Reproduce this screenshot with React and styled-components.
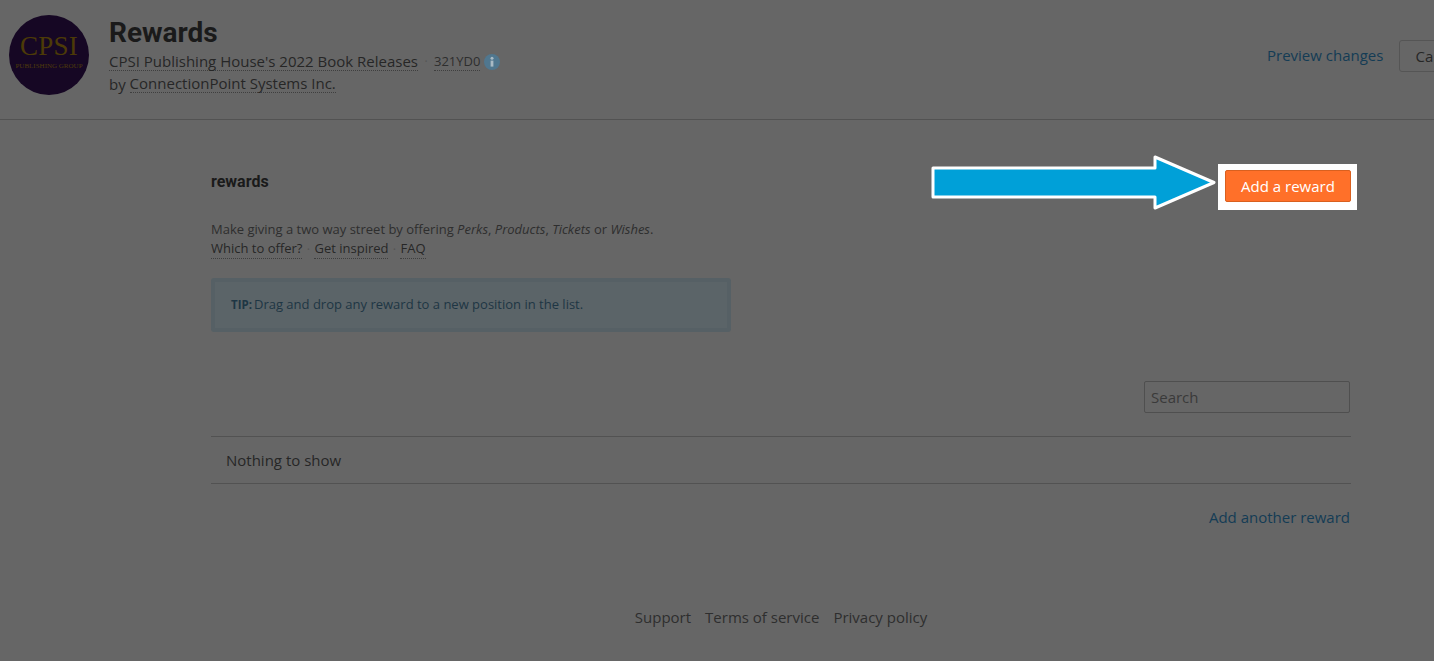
import React from "react";
import styled, { createGlobalStyle } from "styled-components";

const Global = createGlobalStyle`
  html, body { margin: 0; padding: 0; background: #666666; }
  body { font-family: "Open Sans", "Liberation Sans", sans-serif; color: #222; overflow: hidden; }
  * { box-sizing: border-box; }
`;

const Page = styled.div`
  width: 1434px;
  height: 661px;
  overflow: hidden;
  background: #666666;
`;

const Header = styled.header`
  display: grid;
  grid-template-columns: 1267px 200px;
  height: 120px;
  border-bottom: 1px solid #525252;
  padding-top: 15px;
`;

const Brand = styled.div`
  display: flex;
  padding-left: 9px;
  gap: 20px;
`;

const Logo = styled.div`
  width: 80px;
  height: 80px;
  border-radius: 50%;
  background: #160724;
  display: flex;
  flex-direction: column;
  align-items: center;
  padding-top: 18px;
  flex: none;
`;

const LogoMark = styled.span`
  font-family: "Liberation Serif", serif;
  font-size: 27px;
  line-height: 27px;
  color: #4c3a07;
  letter-spacing: 0.3px;
`;

const LogoSub = styled.span`
  font-family: "Liberation Serif", serif;
  font-size: 7px;
  line-height: 8px;
  margin-top: 2px;
  color: #4e3b0b;
  white-space: nowrap;
`;

const Titles = styled.div`
  display: flex;
  flex-direction: column;
  padding-top: 1px;
`;

const Title = styled.h1`
  margin: 0;
  font-family: Roboto, sans-serif;
  font-weight: 700;
  font-size: 28px;
  line-height: 34px;
  margin-bottom: 1px;
  color: #1a1a1a;
`;

const SubLine = styled.div`
  display: flex;
  align-items: center;
  font-size: 15px;
  line-height: 22px;
  color: #262626;
  height: 22px;
  white-space: pre;
`;

const Dotted = styled.span`
  color: ${(p) => p.$color || "#262626"};
  font-size: ${(p) => p.$size || "inherit"};
  line-height: 17px;
  border-bottom: 1px dotted #3f3f3f;
`;

const Sep = styled.span`
  color: #555;
  font-size: 12px;
  width: 16px;
  text-align: center;
`;

const InfoIcon = styled.svg`
  width: 16px;
  height: 16px;
  margin-left: 4px;
`;

const Actions = styled.div`
  display: flex;
  align-items: center;
  gap: 16px;
  height: 32px;
  margin-top: 25px;
`;

const Preview = styled.a`
  font-size: 15px;
  line-height: 20px;
  padding-bottom: 2px;
  color: #143c55;
  white-space: nowrap;
`;

const Ghost = styled.button`
  flex: none;
  height: 32px;
  width: 90px;
  padding: 0 0 0 15px;
  text-align: left;
  font-family: inherit;
  font-size: 15px;
  color: #262626;
  background: #666666;
  border: 1px solid #555;
  border-radius: 3px;
`;

const Main = styled.main`
  width: 1140px;
  margin-left: 211px;
`;

const TopRow = styled.div`
  display: flex;
  justify-content: space-between;
  align-items: flex-start;
  padding-top: 44px;
  position: relative;
`;

const SectionTitle = styled.h2`
  margin: 8px 0 0;
  font-family: Roboto, sans-serif;
  font-size: 16px;
  line-height: 20px;
  font-weight: 700;
  color: #1a1a1a;
`;

const Highlight = styled.div`
  background: #ffffff;
  padding: 6px 6px 8px 7px;
  margin-right: -6px;
`;

const Primary = styled.button`
  display: block;
  width: 126px;
  height: 32px;
  padding: 0;
  background: #ff7029;
  border: 1px solid #d9601f;
  border-radius: 2px;
  color: #fff;
  font-family: inherit;
  font-size: 15px;
`;

const Arrow = styled.svg`
  position: absolute;
  left: 719px;
  top: 34px;
  width: 292px;
  height: 58px;
`;

const Intro = styled.p`
  margin: 10px 0 0;
  font-size: 13px;
  line-height: 19px;
  color: #2e2e2e;
`;

const LinkRow = styled.div`
  display: flex;
  font-size: 13px;
  line-height: 19px;
  height: 19px;
  margin-top: 1px;
  color: #222;
`;

const LinkDot = styled.span`
  width: 12px;
  text-align: center;
  color: #555;
`;

const Tip = styled.div`
  margin-top: 19px;
  width: 520px;
  height: 54px;
  background: #5b6468;
  border: 4px solid #566065;
  border-radius: 3px;
  padding: 0 16px 2px;
  display: flex;
  align-items: center;
  font-size: 13px;
  color: #1e3644;
  gap: 2px;
`;

const TipLabel = styled.b`
  font-size: 11.5px;
  font-weight: 700;
`;

const SearchRow = styled.div`
  display: flex;
  justify-content: flex-end;
  margin-top: 49px;
  padding-right: 1px;
`;

const SearchInput = styled.div`
  width: 206px;
  height: 32px;
  border: 1px solid #4f4f4f;
  border-radius: 2px;
  padding-left: 6px;
  font-size: 15px;
  line-height: 31px;
  color: #3a3a3a;
`;

const EmptyRow = styled.div`
  margin-top: 23px;
  height: 48px;
  border-top: 1px solid #525252;
  border-bottom: 1px solid #525252;
  padding-left: 15px;
  font-size: 15px;
  line-height: 47px;
  color: #262626;
`;

const AddRow = styled.div`
  display: flex;
  justify-content: flex-end;
  margin-top: 23px;
  padding-right: 1px;
  font-size: 15px;
  line-height: 20px;
  color: #143c55;
`;

const Footer = styled.footer`
  display: flex;
  justify-content: center;
  gap: 14px;
  margin-top: 80px;
  font-size: 15px;
  line-height: 20px;
  color: #2e2e2e;
`;

export default function App() {
  return (
    <Page>
      <Global />
      <Header>
        <Brand>
          <Logo>
            <LogoMark>CPSI</LogoMark>
            <LogoSub>PUBLISHING GROUP</LogoSub>
          </Logo>
          <Titles>
            <Title>Rewards</Title>
            <SubLine>
              <Dotted>CPSI Publishing House's 2022 Book Releases</Dotted>
              <Sep>·</Sep>
              <Dotted $size="13px" $color="#2e2e2e">321YD0</Dotted>
              <InfoIcon viewBox="0 0 16 16">
                <circle cx="8" cy="8" r="8" fill="#50778f" />
                <rect x="6.6" y="6.6" width="2.8" height="6" fill="#a9bac4" />
                <circle cx="8" cy="4.3" r="1.5" fill="#a9bac4" />
              </InfoIcon>
            </SubLine>
            <SubLine>
              by <Dotted>ConnectionPoint Systems Inc.</Dotted>
            </SubLine>
          </Titles>
        </Brand>
        <Actions>
          <Preview>Preview changes</Preview>
          <Ghost>Cancel</Ghost>
        </Actions>
      </Header>
      <Main>
        <TopRow>
          <SectionTitle>rewards</SectionTitle>
          <Highlight>
            <Primary>Add a reward</Primary>
          </Highlight>
          <Arrow viewBox="0 0 292 58">
            <path
              d="M3 14 H225 V3 L284 28.5 L225 54 V43 H3 Z"
              fill="#00a0d8"
              stroke="#ffffff"
              strokeWidth="3"
              strokeLinejoin="round"
            />
          </Arrow>
        </TopRow>
        <Intro>
          Make giving a two way street by offering <i>Perks</i>, <i>Products</i>, <i>Tickets</i> or <i>Wishes</i>.
        </Intro>
        <LinkRow>
          <Dotted>Which to offer?</Dotted>
          <LinkDot>·</LinkDot>
          <Dotted>Get inspired</Dotted>
          <LinkDot>·</LinkDot>
          <Dotted>FAQ</Dotted>
        </LinkRow>
        <Tip>
          <TipLabel>TIP:</TipLabel> Drag and drop any reward to a new position in the list.
        </Tip>
        <SearchRow>
          <SearchInput>Search</SearchInput>
        </SearchRow>
        <EmptyRow>Nothing to show</EmptyRow>
        <AddRow>Add another reward</AddRow>
        <Footer>
          <span>Support</span>
          <span>Terms of service</span>
          <span>Privacy policy</span>
        </Footer>
      </Main>
    </Page>
  );
}
